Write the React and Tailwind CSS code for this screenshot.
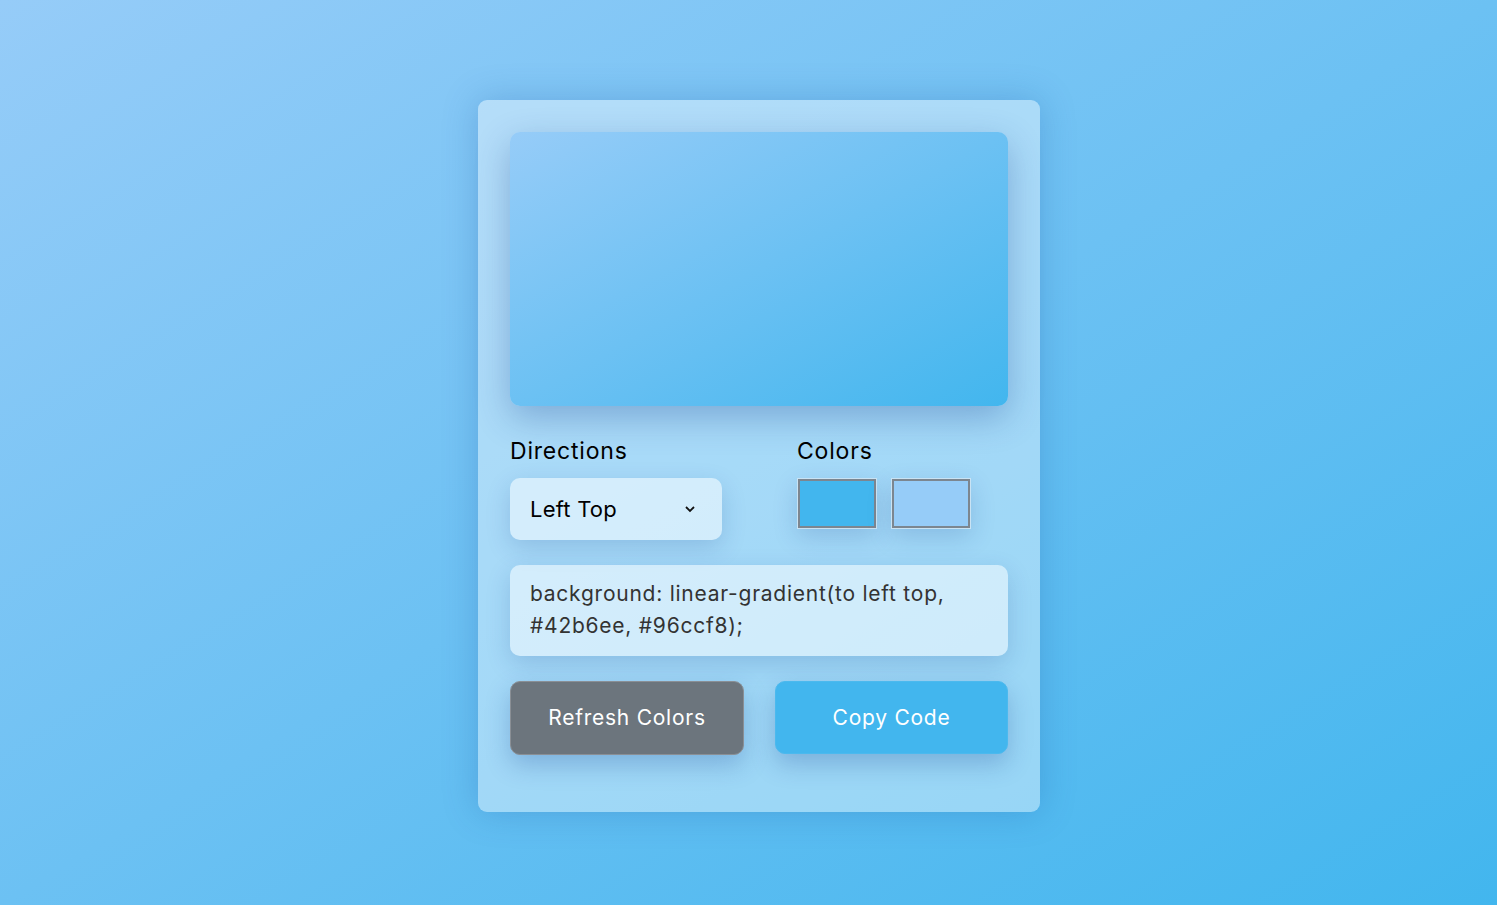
import React from "react";

export default function App() {
  return (
    <div
      className="w-full h-[905px] flex items-center justify-center pl-[21px] pt-[7px] bg-[linear-gradient(to_left_top,#42b6ee,#96ccf8)]"
      style={{ fontFamily: "Inter, 'Noto Sans', sans-serif" }}
    >
      <div className="w-[562px] h-[712px] rounded-[9px] bg-white/40 shadow-[0_0_35px_rgba(20,80,160,0.25)] px-8 pt-8 flex flex-col">
        <div className="h-[274px] w-full rounded-[10px] bg-[linear-gradient(to_left_top,#42b6ee,#96ccf8)] shadow-[0_12px_35px_rgba(20,60,140,0.3)]" />
        <div className="mt-[30px] flex">
          <div className="w-[287px] flex flex-col">
            <div className="text-[23px] leading-[30px] tracking-[0.035em] text-black">Directions</div>
            <div className="mt-[12px] w-[212px] h-[62px] rounded-[10px] bg-white/50 shadow-[0_8px_25px_rgba(20,60,140,0.18)] flex items-center justify-between pl-5 pr-[26px]">
              <span className="text-[22px] tracking-[0.01em] text-black">Left Top</span>
              <svg width="12" height="8" viewBox="0 0 12 8" fill="none">
                <path d="M2 2 L6 6 L10 2" stroke="#111" strokeWidth="1.8" />
              </svg>
            </div>
          </div>
          <div className="flex flex-col">
            <div className="text-[23px] leading-[30px] tracking-[0.035em] text-black">Colors</div>
            <div className="mt-[12px] flex gap-[14px]">
              <div className="w-[80px] h-[51px] border border-[#c9e3f4] shadow-[0_8px_25px_rgba(20,60,140,0.18)]">
                <div className="w-full h-full border-2 border-[#7c8690] bg-[#42b6ee]" />
              </div>
              <div className="w-[80px] h-[51px] border border-[#c9e3f4] shadow-[0_8px_25px_rgba(20,60,140,0.18)]">
                <div className="w-full h-full border-2 border-[#7c8690] bg-[#96ccf8]" />
              </div>
            </div>
          </div>
        </div>
        <div className="mt-[25px] w-full h-[91px] rounded-[10px] bg-white/50 shadow-[0_8px_25px_rgba(20,60,140,0.18)] px-5 pt-[13px] text-[21px] leading-[32px] tracking-[0.036em] text-[#333]">
          background: linear-gradient(to left top, #42b6ee, #96ccf8);
        </div>
        <div className="mt-[25px] flex justify-between">
          <button className="w-[234px] h-[74px] rounded-[10px] bg-[#6c757d] border border-[#8a8f95] text-white text-[21px] tracking-[0.036em] shadow-[0_10px_25px_rgba(20,60,140,0.25)]">
            Refresh Colors
          </button>
          <button className="w-[233px] h-[73px] rounded-[10px] bg-[#42b6ee] border border-[#4bb9ee] text-white text-[21px] tracking-[0.036em] shadow-[0_10px_25px_rgba(20,60,140,0.25)]">
            Copy Code
          </button>
        </div>
      </div>
    </div>
  );
}
